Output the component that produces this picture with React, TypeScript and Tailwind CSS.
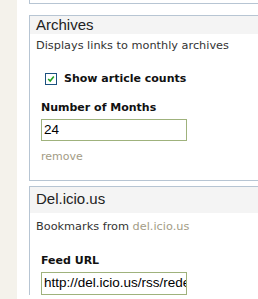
export default function App() {
  return (
    <div className="flex h-[299px] w-[258px] overflow-hidden bg-[#f4f2eb] font-['DejaVu_Sans',Verdana,sans-serif] text-[11px] text-[#333]">
      <div className="w-[17px] shrink-0" />
      <div className="flex-1 bg-white pl-[12px]">
        <div className="h-[4px] border-b border-l border-[#b7c5d3]" />
        <div className="mt-[11px] border-y border-l border-[#b7c5d3]">
          <div className="h-[18px] bg-[#f4f4f4] pl-[6px] font-['Liberation_Sans',Arial,sans-serif] text-[15px] leading-[18px] text-[#222]">Archives</div>
          <div className="pl-[6px] pt-[5px] text-[11.3px] leading-[14px]">Displays links to monthly archives</div>
          <div className="mt-[18px] flex items-center pl-[15px]">
            <span className="flex h-[12px] w-[12px] items-center justify-center border border-[#1c5180] bg-white">
              <svg viewBox="0 0 10 10" className="h-[8px] w-[8px]">
                <path d="M1.5 5 L4 7.5 L8.5 2" fill="none" stroke="#21a121" strokeWidth="2" />
              </svg>
            </span>
            <span className="ml-[7px] font-bold text-[#111]">Show article counts</span>
          </div>
          <div className="mt-[12px] pl-[11px] font-bold text-[#111]">Number of Months</div>
          <div className="mt-[3px] pl-[11px]">
            <div className="flex h-[22px] w-[146px] items-center border border-[#9fb27c] pl-[2px] font-['Liberation_Sans',Arial,sans-serif] text-[13.5px] text-black">
              24
            </div>
          </div>
          <div className="mt-[8px] pb-[14px] pl-[11px] text-[#a39c86]">remove</div>
        </div>
        <div className="mt-[5px] border-t border-l border-[#b7c5d3]">
          <div className="h-[26px] bg-[#f4f4f4] pl-[6px] pt-[3px] font-['Liberation_Sans',Arial,sans-serif] text-[15px] leading-[18px] text-[#222]">Del.icio.us</div>
          <div className="pl-[6px] pt-[7px] text-[11.3px] leading-[14px]">
            Bookmarks from <span className="text-[#a39c86]">del.icio.us</span>
          </div>
          <div className="mt-[19px] pl-[11px] font-bold text-[#111]">Feed URL</div>
          <div className="mt-[3px] pl-[11px]">
            <div className="flex h-[23px] w-[146px] items-center overflow-hidden whitespace-nowrap border border-[#9fb27c] pl-[2px] font-['Liberation_Sans',Arial,sans-serif] text-[13.5px] text-black">
              http://del.icio.us/rss/redesign
            </div>
          </div>
        </div>
      </div>
    </div>
  );
}
